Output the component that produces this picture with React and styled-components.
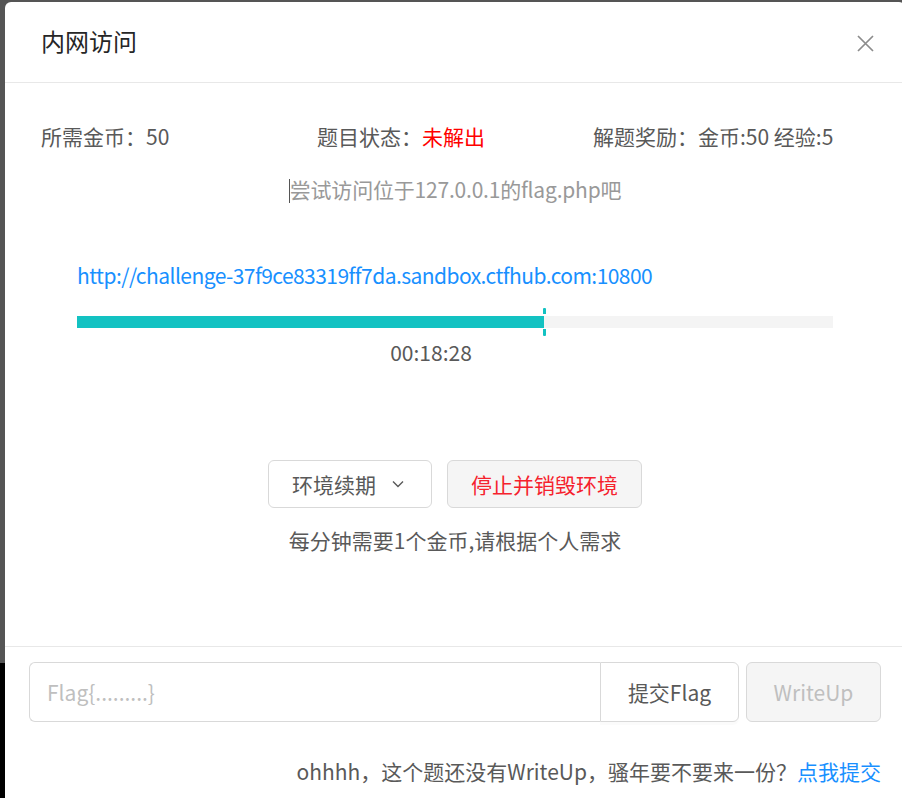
import React from "react";
import styled, { createGlobalStyle } from "styled-components";

const GlobalStyle = createGlobalStyle`
  html, body {
    margin: 0;
    padding: 0;
    overflow: hidden;
  }
  body {
    min-height: 100vh;
    background: linear-gradient(#555555 0, #555555 663px, #000000 663px);
    font-family: "Noto Sans CJK SC", "Noto Sans", sans-serif;
  }
`;

const Modal = styled.div`
  width: 900px;
  margin: 2px 0 0 5px;
  min-height: 820px;
  background: #fff;
  border-radius: 6px 6px 0 0;
  display: flex;
  flex-direction: column;
`;

const Header = styled.div`
  display: flex;
  align-items: center;
  justify-content: space-between;
  height: 80px;
  padding: 0 36px;
  border-bottom: 1px solid #e8e8e8;
`;

const Title = styled.div`
  font-size: 24px;
  color: #262626;
  line-height: 33px;
  margin-top: -3px;
`;

const Close = styled.button`
  border: 0;
  background: none;
  padding: 0;
  width: 20px;
  height: 20px;
  margin-right: -6px;
  margin-top: 3px;
  display: flex;
  align-items: center;
  justify-content: center;
  cursor: pointer;
`;

const Body = styled.div`
  padding: 37px 36px 90px;
  display: flex;
  flex-direction: column;
  font-size: 21px;
  line-height: 32px;
  color: #595959;
`;

const InfoRow = styled.div`
  display: grid;
  grid-template-columns: repeat(3, 276px);
`;

const Red = styled.span`
  color: #ff0000;
`;

const Hint = styled.div`
  margin-top: 21px;
  text-align: center;
  color: #999;
  letter-spacing: -0.2px;
`;

const Caret = styled.span`
  display: inline-block;
  width: 1px;
  height: 24px;
  background: #555;
  vertical-align: -5px;
`;

const Env = styled.div`
  margin: 54px 36px 0;
  display: flex;
  flex-direction: column;
`;

const Link = styled.a`
  color: #1890ff;
  text-decoration: none;
  letter-spacing: ${(p) => (p.$tight ? "-0.55px" : "normal")};
`;

const Track = styled.div`
  position: relative;
  margin-top: 25px;
  height: 12px;
  background: #f4f4f4;
`;

const Fill = styled.div`
  height: 100%;
  background: #13c2c2;
`;

const Tick = styled.div`
  position: absolute;
  top: -8px;
  width: 3px;
  height: 28px;
  margin-left: -1px;
  background: linear-gradient(
    #13c2c2 0,
    #13c2c2 6px,
    transparent 6px,
    transparent 21px,
    #13c2c2 21px
  );
  border-radius: 1px;
`;

const Time = styled.div`
  margin-top: 8px;
  padding-right: 48px;
  text-align: center;
`;

const Actions = styled.div`
  margin-top: 92px;
  display: flex;
  justify-content: center;
  gap: 15px;
`;

const Button = styled.button`
  height: 48px;
  padding: 0 ${(p) => (p.$pad ? p.$pad : 23)}px 0 23px;
  font-family: inherit;
  font-size: 21px;
  border: 1.5px solid #d9d9d9;
  border-radius: 6px;
  background: ${(p) => (p.$grey ? "#f5f5f5" : "#fff")};
  color: ${(p) => (p.$danger ? "#f5222d" : "#595959")};
  display: flex;
  align-items: center;
  gap: 16px;
  cursor: pointer;
`;

const Note = styled.div`
  margin-top: 16px;
  text-align: center;
`;

const Footer = styled.div`
  border-top: 1px solid #e8e8e8;
  padding: 15px 24px 0;
  display: flex;
  flex-direction: column;
`;

const SubmitRow = styled.div`
  display: flex;
  gap: 7px;
`;

const InputGroup = styled.div`
  flex: 1;
  display: flex;
  height: 60px;
`;

const FlagInput = styled.input`
  flex: 1;
  min-width: 0;
  box-sizing: border-box;
  height: 60px;
  padding: 0 17px;
  border: 1.5px solid #d9d9d9;
  border-right: 0;
  border-radius: 6px 0 0 6px;
  font-family: inherit;
  font-size: 21px;
  color: #595959;
  outline: none;
  &::placeholder {
    color: #bfbfbf;
  }
`;

const Addon = styled.button`
  width: 139px;
  height: 60px;
  border: 1.5px solid #d9d9d9;
  border-radius: 0 6px 6px 0;
  background: #fff;
  font-family: inherit;
  font-size: 21px;
  color: #595959;
  box-shadow: 0 3px 0 rgba(0, 0, 0, 0.015);
  cursor: pointer;
`;

const Disabled = styled.button`
  width: 135px;
  height: 60px;
  border: 1.5px solid #d9d9d9;
  border-radius: 6px;
  background: #f5f5f5;
  color: #bfbfbf;
  font-family: inherit;
  font-size: 21px;
`;

const FootNote = styled.div`
  margin-top: 33px;
  text-align: right;
  font-size: 21px;
  line-height: 32px;
  color: #595959;
`;

const App = () => {
  const progress = 61.8;
  return (
    <>
      <GlobalStyle />
      <Modal>
        <Header>
          <Title>内网访问</Title>
          <Close aria-label="close">
            <svg width="17" height="17" viewBox="0 0 17 17">
              <path
                d="M1 1 L16 16 M16 1 L1 16"
                stroke="#8c8c8c"
                strokeWidth="1.7"
                fill="none"
              />
            </svg>
          </Close>
        </Header>
        <Body>
          <InfoRow>
            <div>所需金币：50</div>
            <div>
              题目状态：<Red>未解出</Red>
            </div>
            <div>解题奖励：金币:50 经验:5</div>
          </InfoRow>
          <Hint>
            <Caret />
            尝试访问位于127.0.0.1的flag.php吧
          </Hint>
          <Env>
            <Link href="#" $tight>
              http://challenge-37f9ce83319ff7da.sandbox.ctfhub.com:10800
            </Link>
            <Track>
              <Fill style={{ width: `${progress}%` }} />
              <Tick style={{ left: `${progress}%` }} />
            </Track>
            <Time>00:18:28</Time>
          </Env>
          <Actions>
            <Button $pad={27}>
              环境续期
              <svg width="12" height="8" viewBox="0 0 12 8">
                <path
                  d="M1 1.5 L6 6.5 L11 1.5"
                  stroke="#595959"
                  strokeWidth="1.4"
                  fill="none"
                />
              </svg>
            </Button>
            <Button $grey $danger>
              停止并销毁环境
            </Button>
          </Actions>
          <Note>每分钟需要1个金币,请根据个人需求</Note>
        </Body>
        <Footer>
          <SubmitRow>
            <InputGroup>
              <FlagInput placeholder="Flag{.........}" />
              <Addon>提交Flag</Addon>
            </InputGroup>
            <Disabled disabled>WriteUp</Disabled>
          </SubmitRow>
          <FootNote>
            ohhhh，这个题还没有WriteUp，骚年要不要来一份？
            <Link href="#">点我提交</Link>
          </FootNote>
        </Footer>
      </Modal>
    </>
  );
};

export default App;
